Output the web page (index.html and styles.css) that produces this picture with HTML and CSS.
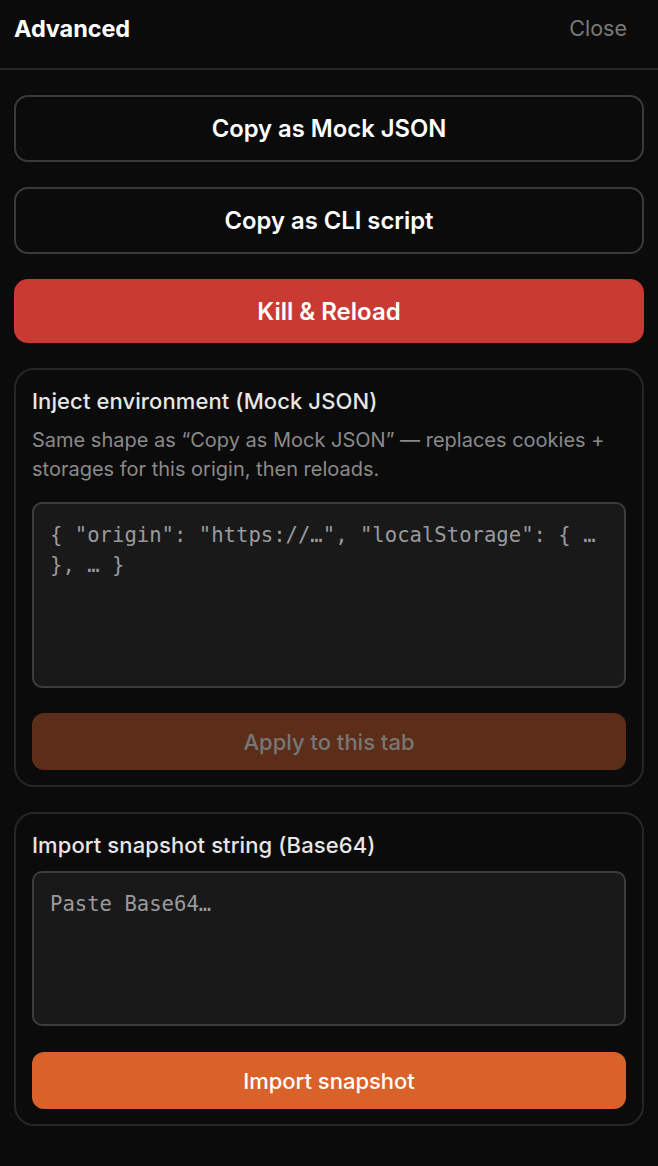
FILE: index.html
```html
<!DOCTYPE html>
<html lang="en">
<head>
<meta charset="utf-8">
<title>Advanced</title>
<link rel="stylesheet" href="styles.css">
</head>
<body>
<header class="header">
  <h1 class="header-title">Advanced</h1>
  <button class="header-close" type="button">Close</button>
</header>
<main class="content">
  <button class="btn btn-outline" type="button">Copy as Mock JSON</button>
  <button class="btn btn-outline" type="button">Copy as CLI script</button>
  <button class="btn btn-danger" type="button">Kill &amp; Reload</button>

  <section class="card">
    <h2 class="card-title">Inject environment (Mock JSON)</h2>
    <p class="card-desc">Same shape as “Copy as Mock JSON” — replaces cookies + storages for this origin, then reloads.</p>
    <textarea class="field field-tall" placeholder="{ &quot;origin&quot;: &quot;https://…&quot;, &quot;localStorage&quot;: { … }, … }"></textarea>
    <button class="btn btn-action btn-disabled" type="button">Apply to this tab</button>
  </section>

  <section class="card">
    <h2 class="card-title">Import snapshot string (Base64)</h2>
    <textarea class="field field-short" placeholder="Paste Base64…"></textarea>
    <button class="btn btn-action btn-primary" type="button">Import snapshot</button>
  </section>
</main>
</body>
</html>
```

FILE: styles.css
```css
* {
  box-sizing: border-box;
}

html, body {
  margin: 0;
  padding: 0;
  background: #0b0b0b;
}

body {
  font-family: Inter, "Noto Sans", "Liberation Sans", sans-serif;
  color: #f2f2f2;
  min-height: 1166px;
}

.header {
  height: 70px;
  display: flex;
  align-items: center;
  justify-content: space-between;
  padding: 0 31px 12px 14px;
  border-bottom: 2px solid #262626;
}

.header-title {
  margin: 0;
  font-size: 23.5px;
  font-weight: 700;
  color: #ffffff;
  letter-spacing: -0.1px;
}

.header-close {
  background: none;
  border: none;
  padding: 0;
  font-family: inherit;
  font-size: 21.5px;
  color: #7a7a7a;
  cursor: pointer;
}

.content {
  display: flex;
  flex-direction: column;
  gap: 25px;
  padding: 25px 14px 40px;
}

.btn {
  display: flex;
  align-items: center;
  justify-content: center;
  width: 100%;
  font-family: inherit;
  font-weight: 600;
  border-radius: 14px;
  cursor: pointer;
}

.btn-outline {
  height: 67px;
  background: #0b0b0b;
  border: 2px solid #3a3a3a;
  color: #ffffff;
  font-size: 23.8px;
}

.btn-danger {
  height: 64px;
  background: #c93a33;
  border: none;
  color: #ffffff;
  font-size: 24px;
}

.card {
  display: flex;
  flex-direction: column;
  border: 2px solid #262626;
  border-radius: 20px;
  padding: 16px 16px 15px;
}

.card-title {
  margin: 0;
  font-size: 22px;
  line-height: 30px;
  font-weight: 500;
  letter-spacing: 0.1px;
  color: #e6e6e6;
}

.card-desc {
  margin: 10px 0 0;
  font-size: 20px;
  line-height: 29px;
  color: #8a8a8a;
}

.field {
  display: block;
  width: 100%;
  resize: none;
  background: #191919;
  border: 2px solid #3c3c3c;
  border-radius: 10px;
  padding: 16px;
  font-family: "DejaVu Sans Mono", "Liberation Mono", monospace;
  font-size: 20.6px;
  line-height: 30px;
  color: #dddddd;
  outline: none;
}

.field::placeholder {
  color: #9a9a9e;
  opacity: 1;
}

.field-tall {
  height: 186px;
  margin-top: 18px;
}

.field-short {
  height: 155px;
  margin-top: 11px;
}

.btn-action {
  height: 57px;
  margin-top: 25px;
  border: none;
  border-radius: 12px;
  font-size: 22px;
  font-weight: 500;
}

.card .field-short + .btn-action {
  margin-top: 26px;
}

.btn-disabled {
  background: #5c2d19;
  color: #777777;
  cursor: default;
}

.btn-primary {
  background: #d9622b;
  color: #ffffff;
}
```
